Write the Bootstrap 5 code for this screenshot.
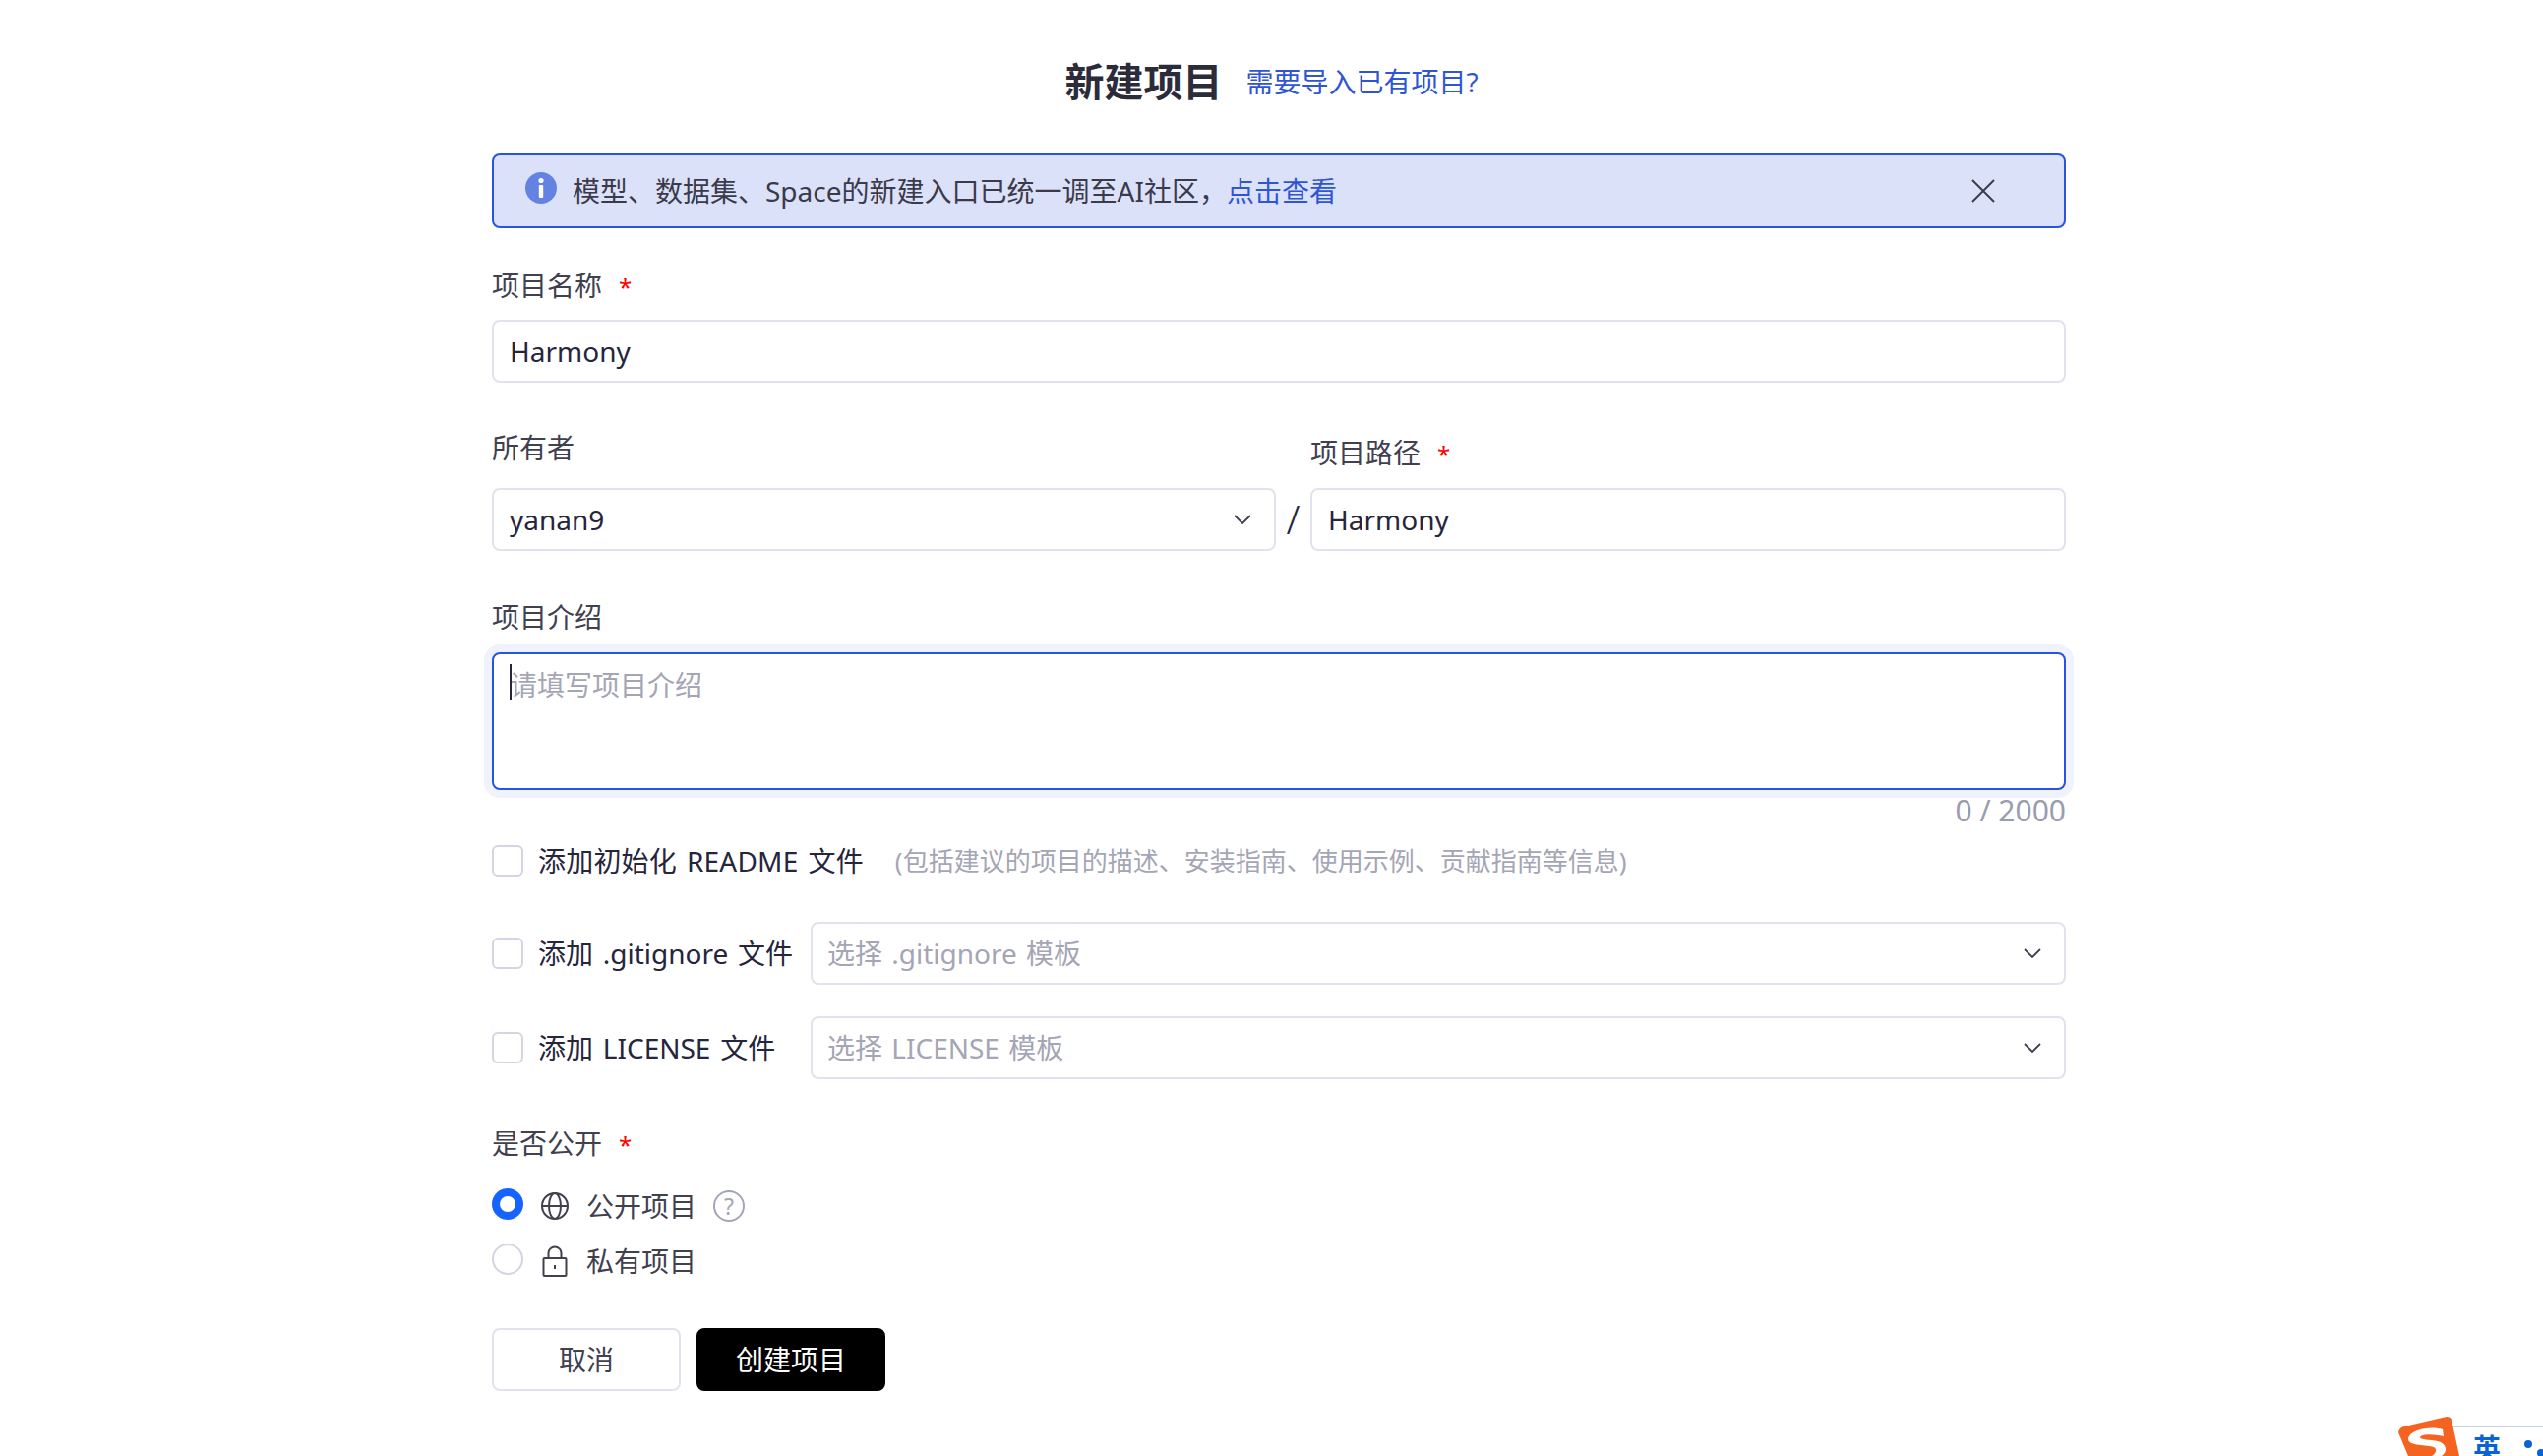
<!DOCTYPE html>
<html lang="zh-CN">
<head>
    <meta charset="UTF-8">
    <meta name="viewport" content="width=device-width, initial-scale=1.0">
    <title>新建项目</title>
    <link href="https://cdn.jsdelivr.net/npm/bootstrap@5.3.0/dist/css/bootstrap.min.css" rel="stylesheet">
    <style>
        html, body { height: 100%; overflow: hidden; }
        body {
            background: #fff;
            color: #40404f;
            font-family: "Noto Sans", "Noto Sans CJK SC", sans-serif;
            font-size: 28px;
        }
        .page-head { padding-top: 54px; margin-bottom: 44px; gap: 24px; }
        .page-title { font-size: 40px; line-height: 58px; font-weight: 700; color: #2b2b3a; margin: 0; }
        .head-link, .notice-link { color: #2f55d4; text-decoration: none; }
        .form-wrap { width: 1600px; margin-left: 500px; }

        .notice {
            height: 76px;
            padding: 0 70px 0 32px;
            border: 2px solid #2b52e0;
            border-radius: 8px;
            background: #dce1fa;
            color: #3a3a4a;
            gap: 16px;
        }
        .notice-icon { margin-top: -6px; flex: none; }
        .notice-close { background: none; border: 0; padding: 0; line-height: 0; }

        .field-label { display: block; height: 40px; line-height: 40px; margin-bottom: 16px; }
        .field-label.owner-label { margin-bottom: 21px; }
        .field-label.name-label { margin-bottom: 15px; }
        .req { color: #f00; font-size: 24px; margin-left: 17px; }

        .form-control, .form-select {
            height: 64px;
            padding: 0 16px;
            border: 2px solid #e2e2ee;
            border-radius: 8px;
            font-size: 28px;
            color: #25253b;
            box-shadow: none;
        }
        .form-control::placeholder { color: #a4a5b5; }
        .form-select {
            padding-right: 60px;
            background-image: url("data:image/svg+xml,%3csvg xmlns='http://www.w3.org/2000/svg' viewBox='0 0 18 10'%3e%3cpath fill='none' stroke='%23404052' stroke-width='1.8' d='M1 1l8 8 8-8'/%3e%3c/svg%3e");
            background-size: 18px 10px;
            background-position: right 23px center;
        }
        .form-select.is-empty { color: #a4a5b5; padding-left: 15px; word-spacing: 2px; }

        .row-first { margin-top: 38px; }
        .row-owner { margin-top: 46px; }
        .owner-col { width: 797px; }
        .path-sep { width: 35px; height: 64px; line-height: 64px; font-size: 40px; font-weight: 300; text-align: center; color: #25253b; }
        .row-intro { margin-top: 47px; }
        .intro-box { position: relative; }
        textarea.intro-input {
            height: 140px;
            padding: 10px 16px;
            border-color: #2b52e0;
            box-shadow: 0 0 0 8px #f0f3fe;
            resize: none;
        }
        .fake-caret { position: absolute; left: 18px; top: 12px; width: 2px; height: 37px; background: #25253b; }
        .intro-count { height: 40px; line-height: 40px; margin-top: 1px; text-align: right; color: #9a9cb0; font-size: 30px; }

        .form-check-input {
            width: 32px;
            height: 32px;
            margin: 0;
            flex: none;
            border: 2px solid #d4d4e4;
        }
        .form-check-input[type=checkbox] { border-radius: 6px; }
        .form-check-input[type=radio]:checked {
            background: #fff;
            border: 8px solid #1664ff;
        }
        .opt-label { color: #25253b; margin-left: 15px; line-height: 40px; word-spacing: 2.500px; }
        .readme-label { letter-spacing: 0.200px; }
        .opt-hint { color: #a4a5b5; font-size: 26px; margin-left: 32px; }
        .row-readme { margin-top: 15px; height: 32px; }
        .row-gitignore { margin-top: 46px; }
        .row-license { margin-top: 32px; }
        .check-col { width: 324px; flex: none; }

        .row-public { margin-top: 45px; }
        .row-public .field-label { margin-bottom: 26px; }
        .radio-row { height: 32px; margin-bottom: 24px; }
        .radio-icon { width: 32px; margin-left: 17px; margin-top: 3px; flex: none; line-height: 0; }
        .radio-text { margin-left: 15px; margin-top: 3px; color: #40404f; }
        .help-dot {
            width: 32px; height: 32px; margin-left: 17px; margin-top: 3px;
            border: 2px solid #a3a5b8;
            border-radius: 50%;
            color: #a3a5b8;
            font-size: 23px;
            line-height: 28px;
            text-align: center;
        }

        .form-actions { margin-top: 54px; gap: 16px; }
        .act-btn { width: 192px; height: 64px; padding: 0; font-size: 28px; border-radius: 8px; }
        .act-cancel { background: #fff; border: 2px solid #e2e2ee; color: #40404f; }
        .act-submit { background: #000; border: 2px solid #000; color: #fff; }

        /* 输入法状态条，盖在页面右下角 */
        .ime-bar { position: fixed; right: 0; bottom: 0; width: 147px; height: 40px; overflow: hidden; }
        .ime-strip {
            position: absolute; left: 54px; top: 9px; right: 0; bottom: 0;
            background: #fff; border-top: 2px solid #c8d4e4;
        }
        .ime-logo { position: absolute; left: 0; top: 0; }
        .ime-lang { position: absolute; left: 76px; top: 15px; font-size: 28px; line-height: 34px; font-weight: 700; color: #0a63d4; }
        .ime-dot { position: absolute; width: 8px; height: 8px; border-radius: 50%; background: #0a63d4; }
        .ime-dot.one { left: 128px; top: 24px; }
        .ime-dot.two { left: 141px; top: 33px; }
    </style>
</head>
<body>
    <div class="page-head d-flex justify-content-center align-items-center">
        <h1 class="page-title">新建项目</h1>
        <a class="head-link" href="#">需要导入已有项目?</a>
    </div>

    <form class="form-wrap">
        <div class="notice d-flex align-items-center">
            <svg class="notice-icon" width="32" height="32" viewBox="0 0 32 32">
                <circle cx="16" cy="16" r="16" fill="#6482e2"/>
                <circle cx="16" cy="8.500" r="2.600" fill="#fff"/>
                <rect x="13.800" y="13" width="4.400" height="13" rx="1" fill="#fff"/>
            </svg>
            <span class="flex-grow-1">模型、数据集、Space的新建入口已统一调至AI社区，<a class="notice-link" href="#">点击查看</a></span>
            <button type="button" class="notice-close" aria-label="关闭">
                <svg width="24" height="24" viewBox="0 0 24 24"><path d="M1 1l22 22M23 1L1 23" stroke="#3c3c4a" stroke-width="2" fill="none"/></svg>
            </button>
        </div>

        <div class="row-first">
            <label class="field-label name-label">项目名称<span class="req">*</span></label>
            <input type="text" class="form-control" value="Harmony">
        </div>

        <div class="row-owner d-flex align-items-end">
            <div class="owner-col">
                <label class="field-label owner-label">所有者</label>
                <select class="form-select"><option>yanan9</option></select>
            </div>
            <div class="path-sep">/</div>
            <div class="flex-grow-1">
                <label class="field-label">项目路径<span class="req">*</span></label>
                <input type="text" class="form-control" value="Harmony">
            </div>
        </div>

        <div class="row-intro">
            <label class="field-label">项目介绍</label>
            <div class="intro-box">
                <textarea class="form-control intro-input" placeholder="请填写项目介绍"></textarea>
                <span class="fake-caret"></span>
            </div>
            <div class="intro-count">0 / 2000</div>
        </div>

        <div class="row-readme d-flex align-items-center">
            <input class="form-check-input" type="checkbox">
            <span class="opt-label readme-label">添加初始化 README 文件</span>
            <span class="opt-hint">(包括建议的项目的描述、安装指南、使用示例、贡献指南等信息)</span>
        </div>

        <div class="row-gitignore d-flex align-items-center">
            <div class="check-col d-flex align-items-center">
                <input class="form-check-input" type="checkbox">
                <span class="opt-label">添加 .gitignore 文件</span>
            </div>
            <select class="form-select is-empty"><option>选择 .gitignore 模板</option></select>
        </div>

        <div class="row-license d-flex align-items-center">
            <div class="check-col d-flex align-items-center">
                <input class="form-check-input" type="checkbox">
                <span class="opt-label">添加 LICENSE 文件</span>
            </div>
            <select class="form-select is-empty"><option>选择 LICENSE 模板</option></select>
        </div>

        <div class="row-public">
            <label class="field-label">是否公开<span class="req">*</span></label>
            <div class="radio-row d-flex align-items-center">
                <input class="form-check-input" type="radio" name="visibility" checked>
                <span class="radio-icon">
                    <svg width="30" height="30" viewBox="0 0 30 30" fill="none" stroke="#40404f" stroke-width="2">
                        <circle cx="15" cy="15" r="13"/>
                        <ellipse cx="15" cy="15" rx="6" ry="13"/>
                        <path d="M2 15h26"/>
                    </svg>
                </span>
                <span class="radio-text">公开项目</span>
                <span class="help-dot">?</span>
            </div>
            <div class="radio-row d-flex align-items-center">
                <input class="form-check-input" type="radio" name="visibility">
                <span class="radio-icon">
                    <svg width="30" height="32" viewBox="0 0 30 32" fill="none" stroke="#40404f" stroke-width="2">
                        <rect x="3.500" y="13" width="23" height="18" rx="1"/>
                        <path d="M8.500 13V8a6.500 6.500 0 0 1 13 0v5M15 20v4"/>
                    </svg>
                </span>
                <span class="radio-text">私有项目</span>
            </div>
        </div>

        <div class="form-actions d-flex">
            <button type="button" class="btn act-btn act-cancel">取消</button>
            <button type="button" class="btn act-btn act-submit">创建项目</button>
        </div>
    </form>

    <div class="ime-bar">
        <div class="ime-strip"></div>
        <svg class="ime-logo" width="64" height="40" viewBox="0 0 64 40">
            <path d="M6 10 L49 0 Q53 0 54 3 L62 40 L10 40 L0 16 Q1 11 6 10Z" fill="#f4631f"/>
            <path d="M45 13 C34 9 12 13 10 22 C9 30 25 28 36 31 C40 33 38 38 34 40 L44 40 C50 36 50 28 40 25 C32 23 22 24 22 21 C24 17 36 18 46 20Z" fill="#fff"/>
        </svg>
        <span class="ime-lang">英</span>
        <span class="ime-dot one"></span>
        <span class="ime-dot two"></span>
    </div>

    <script src="https://cdn.jsdelivr.net/npm/bootstrap@5.3.0/dist/js/bootstrap.bundle.min.js"></script>
</body>
</html>
